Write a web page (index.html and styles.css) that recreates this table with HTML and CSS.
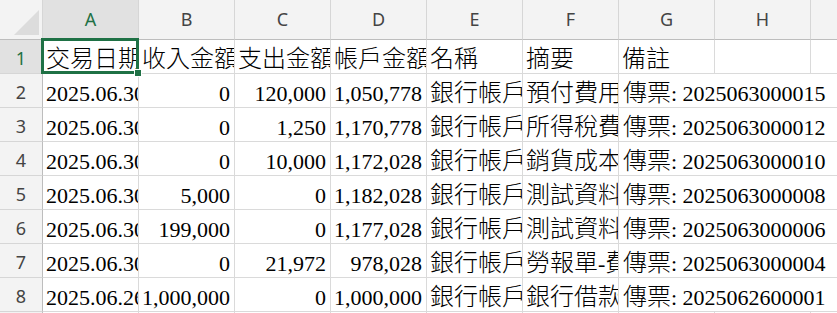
FILE: index.html
```html
<!DOCTYPE html>
<html lang="zh-Hant">
<head>
<meta charset="utf-8">
<title>Sheet</title>
<link rel="stylesheet" href="styles.css">
</head>
<body>
<div class="wrap">
<div class="sheet">
  <div class="corner"><span class="tri"></span></div>
  <div class="ch sel">A</div>
  <div class="ch">B</div>
  <div class="ch">C</div>
  <div class="ch">D</div>
  <div class="ch">E</div>
  <div class="ch">F</div>
  <div class="ch">G</div>
  <div class="ch">H</div>
  <div class="ch last"></div>

  <div class="rh sel">1</div>
  <div class="c"><span class="k">交易日期</span></div>
  <div class="c"><span class="k">收入金額</span></div>
  <div class="c"><span class="k">支出金額</span></div>
  <div class="c"><span class="k">帳戶金額</span></div>
  <div class="c"><span class="k">名稱</span></div>
  <div class="c"><span class="k">摘要</span></div>
  <div class="c"><span class="k">備註</span></div>
  <div class="c"></div>
  <div class="c last"></div>

  <div class="rh">2</div>
  <div class="c">2025.06.30</div>
  <div class="c r">0</div>
  <div class="c r">120,000</div>
  <div class="c r">1,050,778</div>
  <div class="c"><span class="k">銀行帳戶</span></div>
  <div class="c"><span class="k">預付費用</span></div>
  <div class="c g"><span class="k">傳票</span>: 2025063000015</div>

  <div class="rh">3</div>
  <div class="c">2025.06.30</div>
  <div class="c r">0</div>
  <div class="c r">1,250</div>
  <div class="c r">1,170,778</div>
  <div class="c"><span class="k">銀行帳戶</span></div>
  <div class="c"><span class="k">所得稅費用</span></div>
  <div class="c g"><span class="k">傳票</span>: 2025063000012</div>

  <div class="rh">4</div>
  <div class="c">2025.06.30</div>
  <div class="c r">0</div>
  <div class="c r">10,000</div>
  <div class="c r">1,172,028</div>
  <div class="c"><span class="k">銀行帳戶</span></div>
  <div class="c"><span class="k">銷貨成本</span></div>
  <div class="c g"><span class="k">傳票</span>: 2025063000010</div>

  <div class="rh">5</div>
  <div class="c">2025.06.30</div>
  <div class="c r">5,000</div>
  <div class="c r">0</div>
  <div class="c r">1,182,028</div>
  <div class="c"><span class="k">銀行帳戶</span></div>
  <div class="c"><span class="k">測試資料</span></div>
  <div class="c g"><span class="k">傳票</span>: 2025063000008</div>

  <div class="rh">6</div>
  <div class="c">2025.06.30</div>
  <div class="c r">199,000</div>
  <div class="c r">0</div>
  <div class="c r">1,177,028</div>
  <div class="c"><span class="k">銀行帳戶</span></div>
  <div class="c"><span class="k">測試資料</span></div>
  <div class="c g"><span class="k">傳票</span>: 2025063000006</div>

  <div class="rh">7</div>
  <div class="c">2025.06.30</div>
  <div class="c r">0</div>
  <div class="c r">21,972</div>
  <div class="c r">978,028</div>
  <div class="c"><span class="k">銀行帳戶</span></div>
  <div class="c"><span class="k">勞報單</span>-<span class="k">費用</span></div>
  <div class="c g"><span class="k">傳票</span>: 2025063000004</div>

  <div class="rh">8</div>
  <div class="c">2025.06.26</div>
  <div class="c r">1,000,000</div>
  <div class="c r">0</div>
  <div class="c r">1,000,000</div>
  <div class="c"><span class="k">銀行帳戶</span></div>
  <div class="c"><span class="k">銀行借款</span></div>
  <div class="c g"><span class="k">傳票</span>: 2025062600001</div>

  <div class="rh">9</div>
  <div class="c"></div>
  <div class="c"></div>
  <div class="c"></div>
  <div class="c"></div>
  <div class="c"></div>
  <div class="c"></div>
  <div class="c"></div>
  <div class="c"></div>
  <div class="c last"></div>
</div>
<div class="selbox"><span class="handle"></span></div>
</div>
</body>
</html>
```
FILE: styles.css
```css
* { box-sizing: border-box; }
html, body { margin: 0; padding: 0; background: #ffffff; }
body { width: 837px; height: 313px; overflow: hidden; }
.wrap { position: relative; width: 837px; height: 313px; overflow: hidden; }

.sheet {
  display: grid;
  grid-template-columns: 43px repeat(8, 96px) 1fr;
  grid-template-rows: 40px repeat(9, 34px);
  width: 837px;
}

.corner {
  background: #f3f3f3;
  border-right: 1px solid #d6d6d6;
  border-bottom: 1px solid #bdbdbd;
  position: relative;
}
.tri {
  position: absolute;
  left: 14px;
  top: 10px;
  width: 25px;
  height: 25px;
  background: #dcdcdc;
  clip-path: polygon(100% 0, 100% 100%, 0 100%);
}

.ch {
  background: #f3f3f3;
  border-right: 1px solid #d6d6d6;
  border-bottom: 1px solid #bdbdbd;
  color: #444444;
  font-family: "Noto Sans", "Open Sans", sans-serif;
  font-size: 18px;
  display: flex;
  align-items: center;
  justify-content: center;
  padding-bottom: 1px;
}
.ch.sel { background: #e1e1e1; color: #1f7145; }
.ch.last { border-right: none; }

.rh {
  background: #f3f3f3;
  border-right: 1px solid #bdbdbd;
  border-bottom: 1px solid #d6d6d6;
  color: #444444;
  font-family: "Noto Sans", "Open Sans", sans-serif;
  font-size: 18px;
  display: flex;
  align-items: center;
  justify-content: center;
  padding-top: 3px;
}
.rh.sel { background: #e1e1e1; color: #1f7145; }

.c {
  border-right: 1px solid #dadada;
  border-bottom: 1px solid #dadada;
  font-family: "Liberation Serif", "Noto Sans CJK TC", serif;
  font-size: 22px;
  line-height: 27px;
  padding: 6px 4px 0 3px;
  white-space: nowrap;
  overflow: hidden;
  color: #000000;
}
.c.r { text-align: right; padding-left: 0; }
.c.g { grid-column: span 3; border-right: none; padding-left: 4px; }
.c.last { border-right: none; }

.k {
  font-family: "Noto Sans CJK TC", "Noto Sans CJK SC", sans-serif;
  font-size: 24px;
  font-weight: 300;
  line-height: 20px;
}

.selbox {
  position: absolute;
  left: 41px;
  top: 38px;
  width: 98px;
  height: 36px;
  border: 3px solid #1f7145;
}
.handle {
  position: absolute;
  right: -6px;
  bottom: -6px;
  width: 8px;
  height: 8px;
  background: #1f7145;
  border: 1px solid #ffffff;
}
```
